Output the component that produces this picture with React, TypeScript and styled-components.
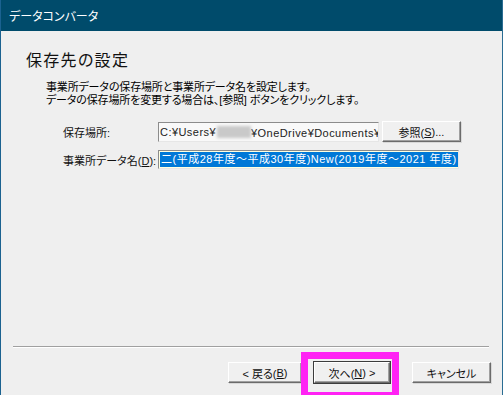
import React from "react";
import styled, { createGlobalStyle } from "styled-components";

const Global = createGlobalStyle`
  html, body { margin: 0; padding: 0; background: #efefef; }
  body { width: 503px; height: 395px; overflow: hidden; }
  * { box-sizing: border-box; }
`;

const FONT = `"Liberation Sans", "Noto Sans CJK JP", sans-serif`;

const Window = styled.div`
  position: relative;
  width: 503px;
  height: 395px;
  display: flex;
  flex-direction: column;
  background: #efefef;
  border-left: 1px solid #1b6290;
  border-right: 1px solid #2a6d93;
  font-family: ${FONT};
  font-feature-settings: "palt";
  color: #000;
  overflow: hidden;
`;

const TitleBar = styled.div`
  height: 31px;
  flex: none;
  background: #004b6b;
  color: #fff;
  font-size: 12px;
  display: flex;
  align-items: center;
  padding-left: 8px;
  padding-bottom: 1px;
`;

const Content = styled.div`
  flex: 1;
  display: flex;
  flex-direction: column;
  padding: 20px 0 0 25px;
`;

const Heading = styled.h1`
  margin: 0;
  font-size: 16px;
  font-weight: normal;
  letter-spacing: 1.3px;
  line-height: 20px;
  color: #111;
`;

const Description = styled.p`
  margin: 10px 0 0 20px;
  font-size: 11px;
  line-height: 13px;
  letter-spacing: -0.15px;
`;

const Form = styled.div`
  margin: 14px 0 0 37px;
  display: grid;
  grid-template-columns: 95px 224px 79px;
  row-gap: 8px;
  align-items: center;
`;

const Label = styled.label`
  font-size: 11px;
  color: #111;
  u { text-decoration: underline; }
`;

const Field = styled.div<{ $span?: number; $tone?: "plain" | "focus" }>`
  grid-column: span ${(p) => p.$span ?? 1};
  height: ${(p) => (p.$tone === "focus" ? 19 : 20)}px;
  margin-right: ${(p) => (p.$tone === "focus" ? 2 : 3)}px;
  border: 1px solid;
  border-color: #8c8c8c #e6e6e6 #e6e6e6 #8c8c8c;
  background: ${(p) => (p.$tone === "focus" ? "#ffffe1" : "#f9f9f9")};
  font-size: 11px;
  letter-spacing: 0.45px;
  white-space: nowrap;
  overflow: hidden;
  display: flex;
  align-items: center;
  padding: 0 1px;
  color: #222;
`;

const Blur = styled.span`
  flex: none;
  display: inline-block;
  width: 34px;
  height: 12px;
  background: #c9c9c9;
  filter: blur(1.5px);
  margin: 0 0 0 1px;
`;

const Selected = styled.span`
  flex: none;
  background: #0078d7;
  color: #fff;
  height: 15px;
  line-height: 15px;
  padding: 0 1px;
  letter-spacing: 0.5px;
`;

const Button = styled.button<{ $default?: boolean; $w: number }>`
  width: ${(p) => p.$w}px;
  height: 21px;
  padding: 0;
  font-family: ${FONT};
  font-feature-settings: "palt";
  font-size: 11px;
  color: #111;
  background: #f0f0f0;
  border: 1px solid;
  border-color: #ffffff #6b6b6b #6b6b6b #ffffff;
  box-shadow: ${(p) =>
    p.$default
      ? "0 0 0 1px #3c3c3c, inset -1px -1px 0 #a0a0a0"
      : "inset -1px -1px 0 #a0a0a0, 1px 1px 0 #d8d8d8"};
  display: flex;
  align-items: center;
  justify-content: center;
  u { text-decoration: underline; }
`;

const Footer = styled.div`
  flex: none;
  padding: 0 11px 12px 12px;
`;

const Separator = styled.hr`
  margin: 0 2px 14px 0;
  height: 2px;
  border: none;
  border-top: 1px solid #a0a0a0;
  border-bottom: 1px solid #ffffff;
  background: none;
`;

const ButtonRow = styled.div`
  display: flex;
  justify-content: flex-end;
  align-items: center;
`;

const Focus = styled.span`
  position: relative;
  margin: 0 22px 0 12px;
  display: flex;
`;

const Highlight = styled.span`
  position: absolute;
  left: -13px;
  right: -9px;
  top: -10px;
  bottom: -16px;
  border: 7px solid #ff22f4;
  pointer-events: none;
`;

export default function App() {
  return (
    <>
      <Global />
      <Window>
        <TitleBar>データコンバータ</TitleBar>
        <Content>
          <Heading>保存先の設定</Heading>
          <Description>
            事業所データの保存場所と事業所データ名を設定します。
            <br />
            データの保存場所を変更する場合は、[参照] ボタンをクリックします。
          </Description>
          <Form>
            <Label>保存場所:</Label>
            <Field $tone="plain">
              C:¥Users¥<Blur />¥OneDrive¥Documents¥ド
            </Field>
            <Button $w={79}>
              参照(<u>S</u>)...
            </Button>
            <Label>
              事業所データ名(<u>D</u>):
            </Label>
            <Field $span={2} $tone="focus">
              <Selected>二(平成28年度～平成30年度)New(2019年度～2021 年度)</Selected>
            </Field>
          </Form>
        </Content>
        <Footer>
          <Separator />
          <ButtonRow>
            <Button $w={74}>
              &lt; 戻る(<u>B</u>)
            </Button>
            <Focus>
              <Button $w={76} $default>
                次へ(<u>N</u>) &gt;
              </Button>
              <Highlight />
            </Focus>
            <Button $w={79}>キャンセル</Button>
          </ButtonRow>
        </Footer>
      </Window>
    </>
  );
}
